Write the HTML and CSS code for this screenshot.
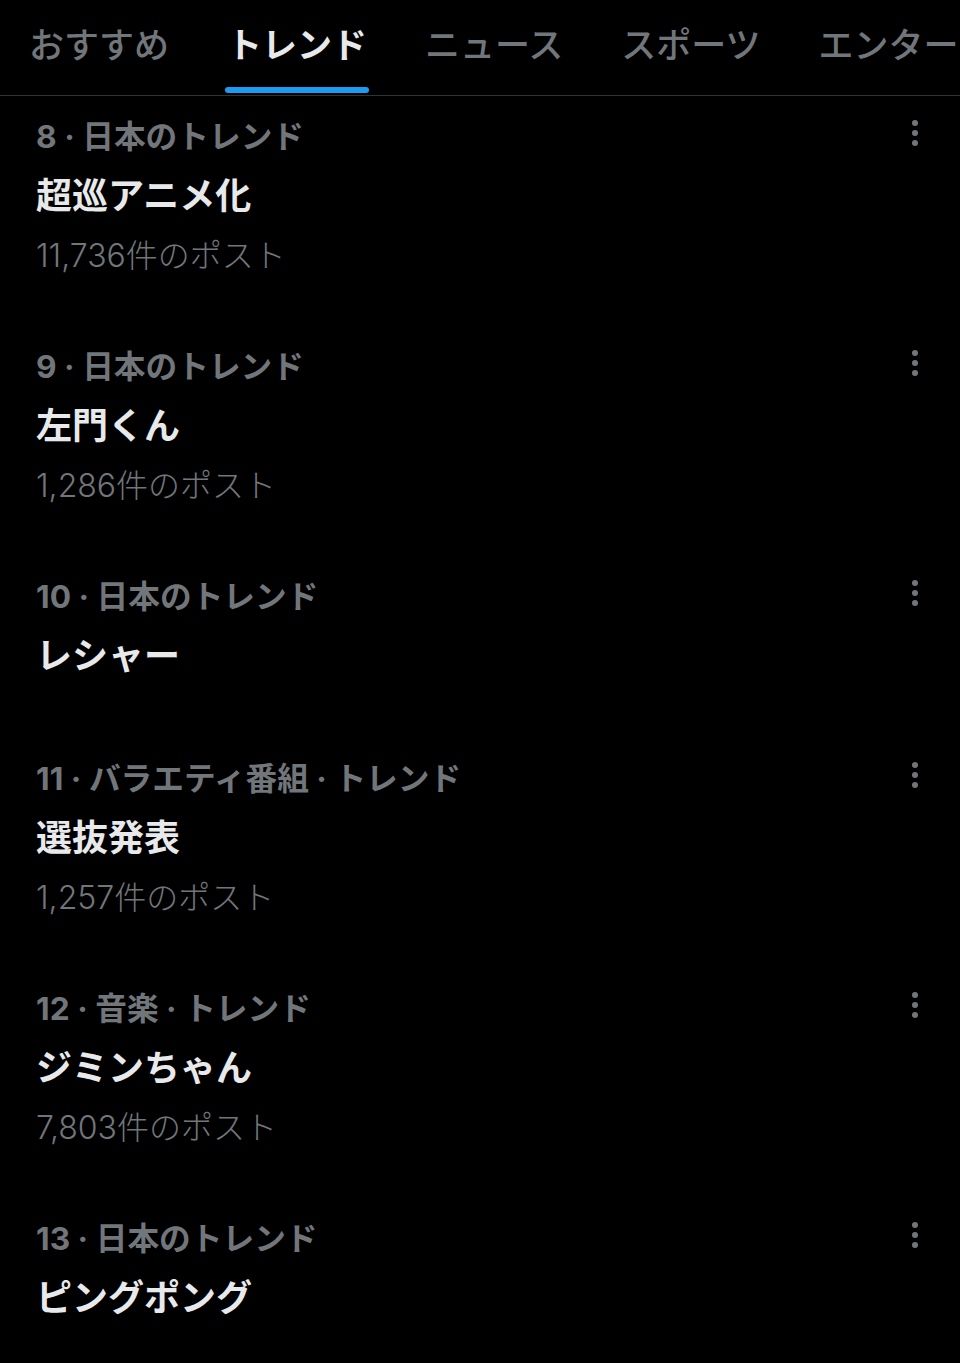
FILE: index.html
```html
<!DOCTYPE html>
<html lang="ja">
<head>
    <meta charset="UTF-8">
    <meta name="viewport" content="width=device-width, initial-scale=1.0">
    <title>トレンド</title>
    <link rel="stylesheet" href="styles.css">
</head>
<body>
    <nav class="tabs">
        <a class="tab">おすすめ</a>
        <a class="tab active">トレンド</a>
        <a class="tab">ニュース</a>
        <a class="tab">スポーツ</a>
        <a class="tab">エンターテイメント</a>
    </nav>

    <div class="trend-list">
        <div class="trend">
            <div class="trend-body">
                <div class="trend-meta">8 · 日本のトレンド</div>
                <div class="trend-title">超巡アニメ化</div>
                <div class="trend-count">11,736件のポスト</div>
            </div>
            <button class="more-btn"><svg viewBox="0 0 30 30"><circle cx="15" cy="5" r="3"/><circle cx="15" cy="15" r="3"/><circle cx="15" cy="25" r="3"/></svg></button>
        </div>
        <div class="trend">
            <div class="trend-body">
                <div class="trend-meta">9 · 日本のトレンド</div>
                <div class="trend-title">左門くん</div>
                <div class="trend-count">1,286件のポスト</div>
            </div>
            <button class="more-btn"><svg viewBox="0 0 30 30"><circle cx="15" cy="5" r="3"/><circle cx="15" cy="15" r="3"/><circle cx="15" cy="25" r="3"/></svg></button>
        </div>
        <div class="trend">
            <div class="trend-body">
                <div class="trend-meta">10 · 日本のトレンド</div>
                <div class="trend-title">レシャー</div>
            </div>
            <button class="more-btn"><svg viewBox="0 0 30 30"><circle cx="15" cy="5" r="3"/><circle cx="15" cy="15" r="3"/><circle cx="15" cy="25" r="3"/></svg></button>
        </div>
        <div class="trend">
            <div class="trend-body">
                <div class="trend-meta">11 · バラエティ番組 · トレンド</div>
                <div class="trend-title">選抜発表</div>
                <div class="trend-count">1,257件のポスト</div>
            </div>
            <button class="more-btn"><svg viewBox="0 0 30 30"><circle cx="15" cy="5" r="3"/><circle cx="15" cy="15" r="3"/><circle cx="15" cy="25" r="3"/></svg></button>
        </div>
        <div class="trend">
            <div class="trend-body">
                <div class="trend-meta">12 · 音楽 · トレンド</div>
                <div class="trend-title">ジミンちゃん</div>
                <div class="trend-count">7,803件のポスト</div>
            </div>
            <button class="more-btn"><svg viewBox="0 0 30 30"><circle cx="15" cy="5" r="3"/><circle cx="15" cy="15" r="3"/><circle cx="15" cy="25" r="3"/></svg></button>
        </div>
        <div class="trend">
            <div class="trend-body">
                <div class="trend-meta">13 · 日本のトレンド</div>
                <div class="trend-title">ピングポング</div>
            </div>
            <button class="more-btn"><svg viewBox="0 0 30 30"><circle cx="15" cy="5" r="3"/><circle cx="15" cy="15" r="3"/><circle cx="15" cy="25" r="3"/></svg></button>
        </div>
    </div>
</body>
</html>
```

FILE: styles.css
```css
body {
    margin: 0;
    background: #000;
    font-family: Inter, "Noto Sans CJK JP", sans-serif;
    overflow: hidden;
}
.tabs {
    display: flex;
    height: 95px;
    border-bottom: 1px solid #2f3336;
    overflow: hidden;
    white-space: nowrap;
}
.tab {
    position: relative;
    flex-shrink: 0;
    display: flex;
    align-items: center;
    padding: 0 29px 10px;
    font-size: 35px;
    font-weight: 500;
    color: #71767b;
}
.tab.active {
    color: #e7e9ea;
    font-weight: 700;
}
.tab.active::after {
    content: "";
    position: absolute;
    left: 27px;
    right: 27px;
    bottom: 2px;
    height: 6px;
    border-radius: 3px;
    background: #1d9bf0;
}
.trend {
    display: flex;
    align-items: flex-start;
    padding: 18px 30px 46px 36px;
}
.trend-body {
    flex: 1;
}
.trend-meta {
    font-size: 31.7px;
    font-weight: 700;
    line-height: 46px;
    color: #71767b;
}
.trend-title {
    font-size: 36px;
    font-weight: 700;
    line-height: 48px;
    margin: 12px 0;
    color: #e7e9ea;
}
.trend-count {
    font-size: 32px;
    font-weight: 300;
    line-height: 48px;
    color: #71767b;
}
.more-btn {
    background: none;
    border: none;
    padding: 0;
    margin-top: 4px;
    width: 30px;
    height: 30px;
}
.more-btn svg {
    display: block;
    width: 30px;
    height: 30px;
    fill: #71767b;
}
```
